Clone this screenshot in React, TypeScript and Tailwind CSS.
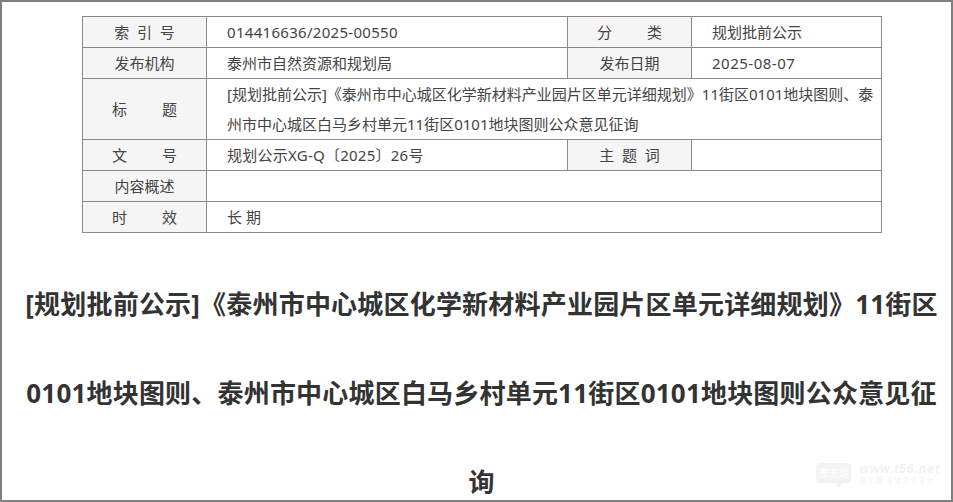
const cjk = "font-['Noto_Sans','Noto_Sans_CJK_SC',sans-serif]";
const labelCell = "border border-[#8a8a8a] bg-[#f5f5f5] text-center p-0 w-[124px]";
const valueCell = "border border-[#8a8a8a] px-5 py-0 text-left";

function Label({ children, rowSpan }: { children: string; rowSpan?: number }) {
  return (
    <td className={labelCell} rowSpan={rowSpan}>
      <span className="whitespace-pre">{children}</span>
    </td>
  );
}

export default function App() {
  return (
    <div className={`relative w-[953px] h-[502px] overflow-hidden bg-white border-2 border-[#808080] text-[#444] ${cjk}`}>
      <div className="pt-[14px] pl-[80px]">
        <table className="w-[800px] table-fixed border-collapse text-[15px] leading-[22px]">
          <colgroup>
            <col className="w-[124px]" />
            <col className="w-[361px]" />
            <col className="w-[124px]" />
            <col className="w-[190px]" />
          </colgroup>
          <tbody>
            <tr className="h-[31px]">
              <Label>{"索  引  号"}</Label>
              <td className={`${valueCell} tracking-[0.3px]`}>014416636/2025-00550</td>
              <Label>{"分         类"}</Label>
              <td className={valueCell}>规划批前公示</td>
            </tr>
            <tr className="h-[31px]">
              <Label>发布机构</Label>
              <td className={valueCell}>泰州市自然资源和规划局</td>
              <Label>发布日期</Label>
              <td className={`${valueCell} tracking-[0.5px]`}>2025-08-07</td>
            </tr>
            <tr className="h-[61px]">
              <Label>{"标         题"}</Label>
              <td className="border border-[#8a8a8a] pl-5 pr-1 py-0 leading-[30px]" colSpan={3}>
                [规划批前公示]《泰州市中心城区化学新材料产业园片区单元详细规划》11街区0101地块图则、泰州市中心城区白马乡村单元11街区0101地块图则公众意见征询
              </td>
            </tr>
            <tr className="h-[31px]">
              <Label>{"文         号"}</Label>
              <td className={`${valueCell} tracking-[0.25px]`}>规划公示XG-Q〔2025〕26号</td>
              <Label>{"主  题  词"}</Label>
              <td className={valueCell}></td>
            </tr>
            <tr className="h-[31px]">
              <Label>内容概述</Label>
              <td className={valueCell} colSpan={3}></td>
            </tr>
            <tr className="h-[31px]">
              <Label>{"时         效"}</Label>
              <td className={valueCell} colSpan={3}>长 期</td>
            </tr>
          </tbody>
        </table>
      </div>

      <h1 className="mt-[27px] pl-[20px] pr-[10px] text-center text-[26px] font-bold leading-[89px] tracking-[0.2px] text-[#333]">
        [规划批前公示]《泰州市中心城区化学新材料产业园片区单元详细规划》11街区0101地块图则、泰州市中心城区白马乡村单元11街区0101地块图则公众意见征询
      </h1>

      {/* faint site watermark */}
      <div className="absolute right-[11px] bottom-[15px] flex items-start gap-[8px]">
        <div className="relative flex h-[20px] w-[35px] items-center justify-center rounded-[4px] bg-[#f3f3f3] text-[10px] leading-none text-white">
          泰无烟
          <svg className="absolute -bottom-[5px] left-[20px]" width="7" height="5" viewBox="0 0 7 5">
            <path d="M0 0h7L2 5z" fill="#f3f3f3" />
          </svg>
        </div>
        <div className="flex flex-col">
          <span className="font-['Liberation_Sans',sans-serif] text-[12px] font-bold italic leading-[13px] tracking-[1px] text-[#f1f1f1]">www.t56.net</span>
          <span className="text-[7px] leading-[9px] tracking-[1px] text-[#f4f4f4]">泰无烟 全球资讯平台</span>
        </div>
      </div>
    </div>
  );
}
